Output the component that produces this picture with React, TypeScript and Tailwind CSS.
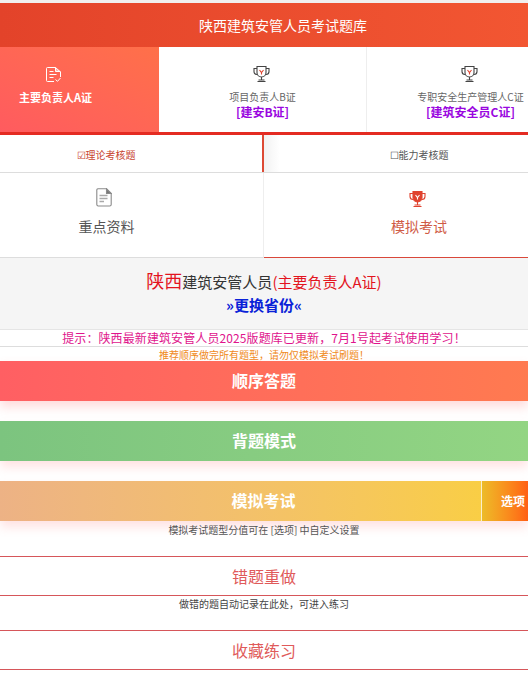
import React from "react";

const FONT = "font-['Noto_Sans_CJK_SC','Liberation_Sans',sans-serif]";

// ── Icons ─────────────────────────────────────────────────────────────────────

function NoteIcon() {
  return (
    <svg className="mr-[4px]" width="17" height="17" viewBox="0 0 17 17" fill="none" stroke="#fff" strokeWidth="1">
      <path d="M9 15.500H2.500a1 1 0 0 1-1-1v-12a1 1 0 0 1 1-1h8l5 4.500v5" strokeLinejoin="round" />
      <path d="M10.500 1.500v4h5" fill="#ffffff88" />
      <path d="M4.500 5.500h4M4.500 8.500h7M4.500 11.500h4" />
      <path d="M10.500 13.500l2 1.800 3-3.300" />
    </svg>
  );
}

function TrophyIcon({ solid }: { solid?: boolean }) {
  const stroke = solid ? "#e0432f" : "#444";
  return (
    <svg className={solid ? "mr-[4px]" : "mr-[2px]"} width="17" height="18" viewBox="0 0 17 18" fill="none" stroke={stroke} strokeWidth="1.100">
      <path d="M4 1.500h9v6a4.500 4.500 0 0 1-9 0z" fill={solid ? "#e0432f" : "none"} />
      <path d="M4 3.500H1v3a3 3 0 0 0 3 3M13 3.500h3v3a3 3 0 0 1-3 3" />
      <path d="M8.500 12v3M4.500 16.500h8M5.500 15h6" />
      <path d="M6.500 5l2 2.500 2-2.500M8.500 7.500v2" stroke={solid ? "#fff" : "#e0432f"} />
    </svg>
  );
}

function DocIcon() {
  return (
    <svg className="mr-[6px]" width="16" height="19" viewBox="0 0 16 19" fill="#fff" stroke="#8a8a8a" strokeWidth="1.100">
      <path d="M2 .8h8.500l4.700 4.700v11a1.500 1.500 0 0 1-1.500 1.500H2A1.500 1.500 0 0 1 .8 16.500v-14A1.500 1.500 0 0 1 2 .8z" />
      <path d="M10.500.8v4.700h4.700z" fill="#777" />
      <path d="M3.500 7.500h8M3.500 10.500h8M3.500 13.500h4.500" strokeWidth="1.400" stroke="#aaa" />
    </svg>
  );
}

// ── Main component ────────────────────────────────────────────────────────────

export default function App() {
  return (
    <div className={`${FONT} w-[528px] h-[687px] overflow-hidden bg-white`}>
      <div className="h-[3px] bg-[#f1efee]" />

      {/* Header */}
      <div className="h-[44px] flex items-center justify-center bg-gradient-to-r from-[#e3432a] to-[#f25632] text-white text-[14px] pl-[38px]">
        陕西建筑安管人员考试题库
      </div>

      {/* Certificate tabs */}
      <div className="h-[85px] flex">
        <div className="w-[159px] flex flex-col items-center bg-gradient-to-tr from-[#ff5b5f] to-[#ff7049] text-white pt-[19px] pr-[48px]">
          <NoteIcon />
          <span className="text-[11px] font-bold leading-[14px] mt-[7px]">主要负责人A证</span>
        </div>
        <div className="w-[208px] flex flex-col items-center border-r border-[#eeeeee] pt-[18px]">
          <TrophyIcon />
          <span className="text-[10px] text-[#666] leading-[14px] mt-[7px]">项目负责人B证</span>
          <span className="text-[12px] font-bold text-[#9a06e0] leading-[16px]">[建安B证]</span>
        </div>
        <div className="flex-1 flex flex-col items-center pt-[18px] pl-[46px]">
          <TrophyIcon />
          <span className="text-[10px] text-[#666] leading-[14px] mt-[7px]">专职安全生产管理人C证</span>
          <span className="text-[12px] font-bold text-[#9a06e0] leading-[16px]">[建筑安全员C证]</span>
        </div>
      </div>

      {/* Question type tabs */}
      <div className="h-[41px] flex border-t-[3px] border-[#e42b22] border-b border-b-[#dddddd]">
        <div className="w-[264px] flex items-center justify-center text-[10px] text-[#c8452f] border-r-2 border-[#dd4a35] pt-px pr-[50px]">
          ☑理论考核题
        </div>
        <div className="flex-1 flex items-center justify-center text-[10px] text-[#555] bg-gradient-to-r from-[#f2f2f2] to-white to-[6%] pt-px pl-[46px]">
          ☐能力考核题
        </div>
      </div>

      {/* Material / mock exam */}
      <div className="h-[85px] flex">
        <div className="w-[264px] flex flex-col items-center border-r border-[#eeeeee] border-b border-b-[#dddddd] pt-[15px] pr-[50px]">
          <DocIcon />
          <span className="text-[14px] text-[#555] leading-[20px] mt-[9px]">重点资料</span>
        </div>
        <div className="flex-1 flex flex-col items-center border-b border-[#d9483a] pt-[17px] pl-[46px]">
          <TrophyIcon solid />
          <span className="text-[14px] text-[#cf5a45] leading-[20px] mt-[8px]">模拟考试</span>
        </div>
      </div>

      {/* Current selection */}
      <div className="h-[72px] flex flex-col items-center bg-[#f5f5f5] border-b border-[#e5e5e5] pt-[10px]">
        <div className="flex items-baseline leading-[24px]">
          <span className="text-[18px] text-[#e3141e]">陕西</span>
          <span className="text-[15px] text-[#333]">建筑安管人员</span>
          <span className="text-[15px] text-[#e3141e]">(主要负责人A证)</span>
        </div>
        <span className="text-[15px] font-bold text-[#0a22d8] leading-[20px] mt-px">»更换省份«</span>
      </div>

      {/* Notices */}
      <div className="h-[17px] flex items-center justify-center border-b border-[#dddddd] text-[12px] text-[#e0148c] tracking-[.1px]">
        提示：陕西最新建筑安管人员2025版题库已更新，7月1号起考试使用学习！
      </div>
      <div className="h-[14px] flex items-center justify-center text-[10px] text-[#f08a1c]">
        推荐顺序做完所有题型，请勿仅模拟考试刷题！
      </div>

      {/* Practice buttons */}
      <div className="h-[40px] flex items-center justify-center bg-gradient-to-r from-[#ff5f63] to-[#ff7a50] text-white text-[16px] font-bold pb-[2px] shadow-[0_6px_10px_rgba(255,110,110,0.25)]">
        顺序答题
      </div>
      <div className="h-[40px] mt-[20px] flex items-center justify-center bg-gradient-to-r from-[#7cc47f] to-[#93d583] text-white text-[16px] font-bold pb-[2px] shadow-[0_6px_10px_rgba(255,110,110,0.2)]">
        背题模式
      </div>
      <div className="h-[40px] mt-[20px] flex text-white font-bold shadow-[0_6px_10px_rgba(255,110,110,0.2)]">
        <div className="flex-1 flex items-center justify-center bg-gradient-to-r from-[#edb285] to-[#f9ce45] text-[16px] border-r border-[#fbeecb] pl-[46px] pb-[2px]">
          模拟考试
        </div>
        <div className="w-[46px] flex items-center justify-center bg-gradient-to-r from-[#ecbb28] to-[#ff5f14] text-[12px] pl-[16px]">
          选项
        </div>
      </div>

      <div className="h-[35px] text-center text-[10px] text-[#555] leading-[17px]">
        模拟考试题型分值可在 [选项] 中自定义设置
      </div>

      <div className="h-[40px] flex items-center justify-center border-y border-[#d6565a] text-[16px] text-[#e05a5a]">
        错题重做
      </div>
      <div className="h-[34px] text-center text-[10px] text-[#444] leading-[15px]">
        做错的题自动记录在此处，可进入练习
      </div>
      <div className="h-[40px] flex items-center justify-center border-y border-[#d6565a] text-[16px] text-[#e05a5a]">
        收藏练习
      </div>
    </div>
  );
}
